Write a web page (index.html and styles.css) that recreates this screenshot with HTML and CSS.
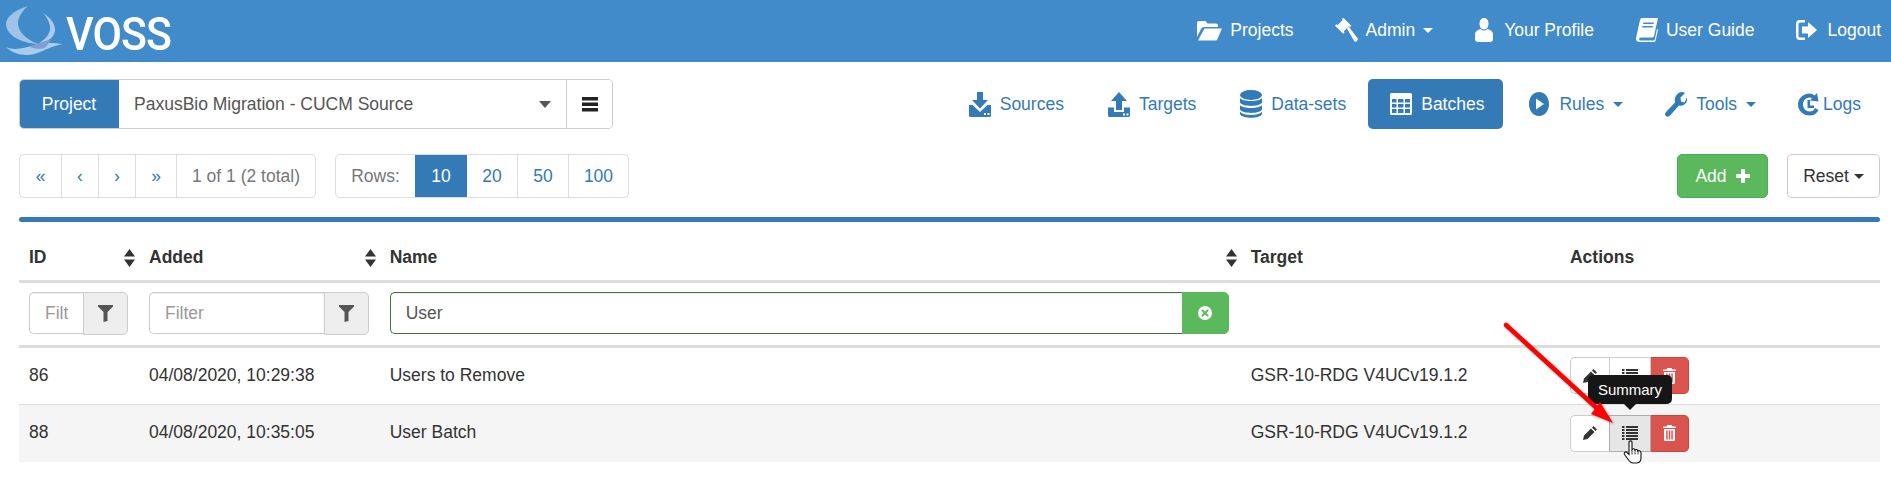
FILE: index.html
```html
<!DOCTYPE html>
<html lang="en">
<head>
<meta charset="utf-8">
<title>VOSS Batches</title>
<link rel="stylesheet" href="styles.css">
</head>
<body>
<svg class="defs" aria-hidden="true">
  <symbol id="i-folder" viewBox="0 0 25 21"><path d="M0 3Q0 1 2 1H8.5L10.5 3.5H19Q21 3.5 21 5.5V7H7Q5 7 4 9L0 17Z M7.5 8.5H25L20.5 19Q20 20.5 18.5 20.5H1Z"/></symbol>
  <symbol id="i-gavel" viewBox="0 0 24 26"><path d="M9 0L17 8 15.500 9.500 14.500 8.500 9 14 10 15 8.500 16.500 0 8 1.500 6.500 2.500 7.500 8 2 7 1Z"/><path d="M12.500 11L14.500 9 23.500 21Q24.500 22.500 23 24T20 24Z"/></symbol>
  <symbol id="i-user" viewBox="0 0 18 24"><path d="M9 0C12 0 13.500 2.500 13.500 5.500S12 11.500 9 11.500 4.500 8.500 4.500 5.500 6 0 9 0Z"/><path d="M5.500 11Q9 14 12.500 11C15.500 12 18 13.500 18 16V21Q18 24 15 24H3Q0 24 0 21V16C0 13.500 2.500 12 5.500 11Z"/></symbol>
  <symbol id="i-book" viewBox="0 0 22 24"><path fill-rule="evenodd" d="M6 0H22L18 18Q17.500 19.500 16 19.500H5Q3 19.500 3 21T5 22.500H18.500L21 11 22 12 19.500 23Q19 24 18 24H4Q0 24 0 20.500Q0 19.500 .5 18L4 2Q4.500 0 6 0ZM7.500 4.500L7 6H17.500L18 4.500ZM6.500 8L6 9.500H16.500L17 8Z"/></symbol>
  <symbol id="i-logout" viewBox="0 0 21 20"><path d="M4 0H9V2.500H4Q2.500 2.500 2.500 4V16Q2.500 17.500 4 17.500H9V20H4Q0 20 0 16V4Q0 0 4 0Z"/><path d="M12 2L21 10 12 18V13.500H6V6.500H12Z"/></symbol>
  <symbol id="i-import" viewBox="0 0 22 25"><path d="M8 0H14V8H19L11 16.500 3 8H8Z"/><path d="M0 13H3.500L11 20 18.500 13H22V23.500Q22 25 20.500 25H1.500Q0 25 0 23.500Z"/><rect x="15" y="21" width="2" height="2" fill="#fff"/><rect x="18.500" y="21" width="2" height="2" fill="#fff"/></symbol>
  <symbol id="i-export" viewBox="0 0 22 25"><path d="M11 0L19 9H14V18H8V9H3Z"/><path d="M0 15.500H6V20H16V15.500H22V23.500Q22 25 20.500 25H1.500Q0 25 0 23.500Z"/><rect x="15" y="21.500" width="2" height="2" fill="#fff"/><rect x="18.500" y="21.500" width="2" height="2" fill="#fff"/></symbol>
  <symbol id="i-db" viewBox="0 0 22 28"><ellipse cx="11" cy="5" rx="11" ry="5"/><path d="M0 8C2 12 20 12 22 8V12.500C20 17 2 17 0 12.500Z"/><path d="M0 15C2 19 20 19 22 15V19.500C20 24 2 24 0 19.500Z"/><path d="M0 21.500C2 26 20 26 22 21.500V24C20 29 2 29 0 24Z"/></symbol>
  <symbol id="i-th" viewBox="0 0 22 22"><path fill-rule="evenodd" d="M1.500 0H20.500Q22 0 22 1.500V20.500Q22 22 20.500 22H1.500Q0 22 0 20.500V1.500Q0 0 1.500 0ZM2 6V9.500H6.500V6ZM8 6V9.500H13.500V6ZM15 6V9.500H20V6ZM2 11V14.500H6.500V11ZM8 11V14.500H13.500V11ZM15 11V14.500H20V11ZM2 16V20H6.500V16ZM8 16V20H13.500V16ZM15 16V20H20V16Z"/></symbol>
  <symbol id="i-play" viewBox="0 0 20 24"><path fill-rule="evenodd" d="M10 0C16 0 20 5.500 20 12S16 24 10 24 0 18.500 0 12 4 0 10 0ZM7 6.500V17.500L15 12Z"/></symbol>
  <symbol id="i-wrench" viewBox="0 0 22 25"><path d="M16.500 0Q18.500 0 20 1L15.500 5.500 16 9.500 19.500 10.500 22 5Q22.500 9 20.500 11.500 18 14.500 14 13.500L5 23.500Q3 25.500 1 24T1 20L10 10.500Q9 6 11.500 3 13.500 0 16.500 0Z"/></symbol>
  <symbol id="i-logs" viewBox="0 0 21 25"><path fill-rule="evenodd" d="M11.500 1.500Q14.500 1.500 16.500 3.500L19 1 20.500 9.500 12 8.500 14 6Q13 5.500 11.500 5.500C8 5.500 5 8.500 5 12.500S8 19.500 11.500 19.500Q15.500 19.500 17 16L20.500 18Q18 23.500 11.500 23.500C5 23.500 0 18.500 0 12.500S5 1.500 11.500 1.500Z"/><path d="M9.500 8H12V13.500H16V16H9.500Z"/></symbol>
  <symbol id="i-menu" viewBox="0 0 16 15"><rect width="16" height="3.500"/><rect y="5.500" width="16" height="3.500"/><rect y="11" width="16" height="3.500"/></symbol>
  <symbol id="i-filter" viewBox="0 0 15 17"><path d="M0 0H15V1.500L9.500 7V16L5.500 17V7L0 1.500Z"/></symbol>
  <symbol id="i-x" viewBox="0 0 14 14"><path fill-rule="evenodd" d="M7 0A7 7 0 1 1 7 14 7 7 0 1 1 7 0ZM4.600 3.200L3.200 4.600 5.600 7 3.200 9.400 4.600 10.800 7 8.400 9.400 10.800 10.800 9.400 8.400 7 10.800 4.600 9.400 3.200 7 5.600Z"/></symbol>
  <symbol id="i-plus" viewBox="0 0 14 14"><path d="M5 0H9V5H14V9H9V14H5V9H0V5H5Z"/></symbol>
  <symbol id="i-pencil" viewBox="0 0 14 14"><path d="M10.500 0L14 3.500 12.500 5 9 1.500Z"/><path d="M8 2.500L11.500 6 4.500 13 0 14 1 9.500Z"/></symbol>
  <symbol id="i-list" viewBox="0 0 16 14"><path d="M0 0H2.500V2H0ZM4 0H16V2H4ZM0 3H2.500V5H0ZM4 3H16V5H4ZM0 6H2.500V8H0ZM4 6H16V8H4ZM0 9H2.500V11H0ZM4 9H16V11H4ZM0 12H2.500V14H0ZM4 12H16V14H4Z"/></symbol>
  <symbol id="i-trash" viewBox="0 0 13 16"><path d="M4.500 0H8.500L9.500 1.500H13V3H0V1.500H3.500Z"/><path fill-rule="evenodd" d="M1 4H12V14.500Q12 16 10.500 16H2.500Q1 16 1 14.500ZM3.200 5.500V14.500H4.700V5.500ZM5.750 5.500V14.500H7.250V5.500ZM8.300 5.500V14.500H9.800V5.500Z"/></symbol>
  <symbol id="i-sort" viewBox="0 0 11 18"><path d="M5.500 0L11 7.500H0ZM0 10.500H11L5.500 18Z"/></symbol>
</svg>

<header class="navbar">
  <a class="brand" href="#">
    <svg class="brand-mark" viewBox="0 0 60 50">
      <path class="arc-a" d="M23 0C10 4 1 11 1 18C1 28 14 37 33 38C20 33 12 24 13 16C14 10 18 4 23 0Z"/>
      <path class="arc-c" d="M38 7C46 12 50 18 50 24C50 31 43 36 33 38C41 33 46 27 45 20C44 15 41 10 38 7Z"/>
      <path class="arc-c" d="M1 41C10 45 18 42 30 39C40 36 50 37 58 38C48 40 42 43 35 46C25 51 10 50 1 41Z"/>
      <path class="arc-b" d="M24 40.500C32 38 38 35 46 34C44 37 42 39 41 41C36 44 30 43 24 40.500Z"/>
    </svg>
    <span class="brand-text">VOSS</span>
  </a>
  <nav class="nav-links">
    <a class="nav-link" href="#"><svg class="ic-folder"><use href="#i-folder"/></svg>Projects</a>
    <a class="nav-link" href="#"><svg class="ic-gavel"><use href="#i-gavel"/></svg>Admin<span class="caret"></span></a>
    <a class="nav-link gap-wide" href="#"><svg class="ic-user"><use href="#i-user"/></svg>Your Profile</a>
    <a class="nav-link gap-wide" href="#"><svg class="ic-book"><use href="#i-book"/></svg>User Guide</a>
    <a class="nav-link gap-wide" href="#"><svg class="ic-logout"><use href="#i-logout"/></svg>Logout</a>
  </nav>
</header>

<main class="page">
  <div class="top-row">
    <div class="project-group">
      <span class="project-label">Project</span>
      <span class="project-select">PaxusBio Migration - CUCM Source<span class="caret caret-select"></span></span>
      <button class="project-menu" type="button"><svg class="ic-menu"><use href="#i-menu"/></svg></button>
    </div>
    <nav class="pills">
      <a class="pill" href="#"><svg class="ic-import"><use href="#i-import"/></svg>Sources</a>
      <a class="pill" href="#"><svg class="ic-import"><use href="#i-export"/></svg>Targets</a>
      <a class="pill" href="#"><svg class="ic-db"><use href="#i-db"/></svg>Data-sets</a>
      <a class="pill active" href="#"><svg class="ic-th"><use href="#i-th"/></svg>Batches</a>
      <a class="pill pill-rules" href="#"><svg class="ic-play"><use href="#i-play"/></svg>Rules<span class="caret"></span></a>
      <a class="pill pill-tools" href="#"><svg class="ic-wrench"><use href="#i-wrench"/></svg>Tools<span class="caret"></span></a>
      <a class="pill pill-logs" href="#"><svg class="ic-logs"><use href="#i-logs"/></svg>Logs</a>
    </nav>
  </div>

  <div class="tool-row">
    <div class="pager-side">
      <div class="seg">
        <a class="seg-cell pg-first" href="#">«</a>
        <a class="seg-cell pg-prev" href="#">‹</a>
        <a class="seg-cell pg-next" href="#">›</a>
        <a class="seg-cell pg-last" href="#">»</a>
        <span class="seg-cell seg-text pg-info">1 of 1 (2 total)</span>
      </div>
      <div class="seg">
        <span class="seg-cell seg-text rows-label">Rows:</span>
        <a class="seg-cell rows-10 on" href="#">10</a>
        <a class="seg-cell rows-20" href="#">20</a>
        <a class="seg-cell rows-50" href="#">50</a>
        <a class="seg-cell rows-100" href="#">100</a>
      </div>
    </div>
    <div class="tool-actions">
      <button class="btn btn-add" type="button">Add<svg class="ic-plus"><use href="#i-plus"/></svg></button>
      <button class="btn btn-reset" type="button">Reset<span class="caret caret-reset"></span></button>
    </div>
  </div>

  <div class="rule"></div>

  <table class="grid">
    <colgroup>
      <col class="col-id"><col class="col-added"><col class="col-name"><col class="col-target"><col class="col-actions">
    </colgroup>
    <thead>
      <tr class="head-row">
        <th><div class="th-in">ID<svg class="ic-sort"><use href="#i-sort"/></svg></div></th>
        <th><div class="th-in">Added<svg class="ic-sort"><use href="#i-sort"/></svg></div></th>
        <th><div class="th-in">Name<svg class="ic-sort"><use href="#i-sort"/></svg></div></th>
        <th>Target</th>
        <th>Actions</th>
      </tr>
      <tr class="filter-row">
        <td><div class="fgroup"><input class="finput" type="text" placeholder="Filter"><span class="faddon faddon-id"><svg class="ic-filter"><use href="#i-filter"/></svg></span></div></td>
        <td><div class="fgroup"><input class="finput" type="text" placeholder="Filter"><span class="faddon"><svg class="ic-filter"><use href="#i-filter"/></svg></span></div></td>
        <td class="f-name"><div class="fgroup"><input class="finput finput-ok" type="text" value="User"><span class="faddon faddon-ok"><svg class="ic-x"><use href="#i-x"/></svg></span></div></td>
        <td></td>
        <td></td>
      </tr>
    </thead>
    <tbody>
      <tr class="data-row">
        <td>86</td><td>04/08/2020, 10:29:38</td><td>Users to Remove</td><td>GSR-10-RDG V4UCv19.1.2</td>
        <td><div class="acts">
          <button class="act act-edit" type="button"><svg class="ic-pencil"><use href="#i-pencil"/></svg></button>
          <button class="act act-list" type="button"><svg class="ic-list"><use href="#i-list"/></svg></button>
          <button class="act act-del" type="button"><svg class="ic-trash"><use href="#i-trash"/></svg></button>
        </div></td>
      </tr>
      <tr class="data-row alt">
        <td>88</td><td>04/08/2020, 10:35:05</td><td>User Batch</td><td>GSR-10-RDG V4UCv19.1.2</td>
        <td><div class="acts">
          <button class="act act-edit" type="button"><svg class="ic-pencil"><use href="#i-pencil"/></svg></button>
          <button class="act act-list hover" type="button"><svg class="ic-list"><use href="#i-list"/></svg><span class="tooltip">Summary</span></button>
          <button class="act act-del" type="button"><svg class="ic-trash"><use href="#i-trash"/></svg></button>
        </div></td>
      </tr>
    </tbody>
  </table>
</main>

<svg class="red-arrow" viewBox="0 0 120 110">
  <path d="M6 5L100 91" class="arrow-shaft"/>
  <path d="M113 103L91 94 100 82Z" class="arrow-head"/>
</svg>
<svg class="hand" viewBox="0 0 20 24">
  <path d="M6 2C6 .5 9 .5 9 2V9.500C10 8.500 11.500 8.500 12 10 13 9 14.500 9.500 15 11 16 10 18 11 18 13V18C18 21 16 23 13 23H10C8 23 7 22 6 20.500L1.500 14.500C.5 13 2.500 11 4 12.500L6 14.500Z"/>
  <path d="M9 10V14.500M12 10V14.500M15 11V14.500" class="hand-line"/>
</svg>
</body>
</html>
```

FILE: styles.css
```css
* { box-sizing: border-box; }
html, body { margin: 0; padding: 0; }
body {
  position: relative;
  width: 1891px;
  height: 487px;
  overflow: hidden;
  background: #fff;
  color: #333;
  font-family: "Liberation Sans", Arial, sans-serif;
  font-size: 17.5px;
  line-height: 25px;
}
a { text-decoration: none; color: inherit; }
svg { fill: currentColor; display: block; flex: none; }
.defs { position: absolute; width: 0; height: 0; overflow: hidden; }

/* top bar */
.navbar {
  height: 62px;
  background: #428bca;
  display: flex;
  justify-content: space-between;
  align-items: center;
  padding: 0 10px 0 5px;
  color: #fff;
}
.brand { display: flex; align-items: center; height: 62px; }
.brand-mark { width: 60px; height: 50px; margin-top: 0; }
.arc-a { fill: #9dc3e8; }
.arc-c { fill: #a9cbec; }
.arc-b { fill: #7f9ed4; }
.brand-text {
  margin-left: 1px;
  font-family: Roboto, sans-serif;
  font-weight: 500;
  font-size: 46px;
  line-height: 62px;
  letter-spacing: -1px;
  margin-top: 5px;
  transform: scaleX(.93);
  transform-origin: left center;
}
.nav-links { display: flex; gap: 41px; padding-bottom: 2px; }
.nav-link { display: flex; align-items: center; gap: 8px; }
.gap-wide { margin-left: 1px; }
.ic-folder { width: 25px; height: 21px; }
.ic-gavel { width: 23px; height: 25px; }
.ic-user { width: 18px; height: 24px; margin-right: 3px; }
.ic-book { width: 22px; height: 24px; }
.ic-logout { width: 21px; height: 20px; margin-right: 2px; }
.caret {
  display: inline-block;
  width: 0;
  height: 0;
  border-top: 5px solid currentColor;
  border-left: 5px solid transparent;
  border-right: 5px solid transparent;
}

/* page */
.page { padding: 0 11px 0 19px; }
.top-row {
  margin-top: 17px;
  display: flex;
  justify-content: space-between;
  height: 50px;
}
.project-group {
  width: 594px;
  display: flex;
  border: 1px solid #ccc;
  border-radius: 5px;
  overflow: hidden;
}
.project-label {
  width: 100px;
  margin: -1px 0 -1px -1px;
  background: #337ab7;
  color: #fff;
  display: flex;
  align-items: center;
  justify-content: center;
}
.project-select {
  flex: 1;
  display: flex;
  align-items: center;
  justify-content: space-between;
  padding: 0 15px;
  color: #555;
}
.caret-select {
  border-top-width: 7px;
  border-left-width: 6.500px;
  border-right-width: 6.500px;
}
.project-menu {
  width: 46px;
  border: 0;
  border-left: 1px solid #ccc;
  background: #fff;
  color: #222;
  padding: 0;
  display: flex;
  align-items: center;
  justify-content: center;
}
.ic-menu { width: 16px; height: 15px; }

.pills { display: flex; align-items: stretch; color: #337ab7; }
.pill {
  display: flex;
  align-items: center;
  gap: 9px;
  padding: 0 19px 0 22px;
  border-radius: 5px;
  margin-left: 3px;
}
.pill.active { background: #337ab7; color: #fff; }
.pill-rules { padding-left: 23px; }
.pill-tools { padding-left: 20px; }
.pill-logs { gap: 4px; padding-left: 20px; }
.ic-import { width: 22px; height: 25px; }
.ic-db { width: 22px; height: 28px; }
.ic-th { width: 22px; height: 22px; }
.ic-play { width: 20px; height: 24px; margin-right: 1px; }
.ic-wrench { width: 22px; height: 25px; }
.ic-logs { width: 21px; height: 25px; }

.tool-row {
  margin-top: 25px;
  height: 44px;
  display: flex;
  justify-content: space-between;
}
.pager-side { display: flex; gap: 19px; }
.seg {
  display: flex;
  border: 1px solid #ddd;
  border-radius: 5px;
  overflow: hidden;
  color: #337ab7;
}
.seg-cell {
  display: flex;
  align-items: center;
  justify-content: center;
  border-left: 1px solid #ddd;
}
.seg-cell:first-child { border-left: 0; }
.seg-text { color: #777; }
.pg-first { width: 41px; }
.pg-prev { width: 37px; }
.pg-next { width: 37px; }
.pg-last { width: 41px; }
.pg-info { width: 139px; }
.rows-label { width: 79px; }
.rows-10 { width: 52px; margin: -1px 0; }
.rows-10.on { background: #337ab7; color: #fff; border-left: 0; }
.rows-20 { width: 50px; border-left: 0; }
.rows-50 { width: 51px; }
.rows-100 { width: 60px; }

.tool-actions { display: flex; gap: 19px; }
.btn {
  height: 44px;
  border-radius: 5px;
  font: inherit;
  padding: 0;
  display: flex;
  align-items: center;
  justify-content: center;
}
.btn-add {
  width: 91px;
  background: #5cb85c;
  border: 1px solid #4cae4c;
  color: #fff;
  gap: 9px;
}
.ic-plus { width: 14px; height: 14px; }
.btn-reset {
  width: 93px;
  background: #fff;
  border: 1px solid #ccc;
  color: #333;
}
.caret-reset { margin-left: 5px; }

.rule {
  margin-top: 19px;
  height: 5px;
  background: #337ab7;
  border-radius: 3px;
}

/* table */
.grid {
  margin-top: 8px;
  width: 1861px;
  table-layout: fixed;
  border-collapse: separate;
  border-spacing: 0;
}
.col-id { width: 120px; }
.col-added { width: 240.700px; }
.col-name { width: 861px; }
.col-target { width: 319.300px; }
.col-actions { width: 320px; }
.head-row th {
  height: 53px;
  padding: 5px 4px 0 10px;
  text-align: left;
  font-weight: 700;
  border-bottom: 3px solid #ddd;
}
.th-in { display: flex; justify-content: space-between; align-items: center; }
.ic-sort { width: 11px; height: 18px; }
.filter-row td {
  height: 65px;
  padding: 9px 11px 11px 10px;
  border-bottom: 3px solid #ddd;
}
.filter-row .f-name { padding-right: 12px; }
.fgroup { display: flex; height: 42px; }
.finput {
  flex: 1;
  min-width: 0;
  height: 42px;
  font: inherit;
  color: #555;
  background: #fff;
  border: 1px solid #ccc;
  border-right: 0;
  border-radius: 5px 0 0 5px;
  padding: 0 15px;
  box-shadow: inset 0 1px 1px rgba(0, 0, 0, .075);
  outline: none;
}
.finput::placeholder { color: #999; opacity: 1; }
.finput-ok { border-color: #3c763d; }
.faddon {
  width: 45px;
  height: 43px;
  background: #eee;
  border: 1px solid #ccc;
  border-radius: 0 5px 5px 0;
  display: flex;
  align-items: center;
  justify-content: center;
  color: #555;
}
.faddon-ok {
  width: 47px;
  height: 42px;
  background: #5cb85c;
  border-color: #5cb85c;
  color: #fff;
}
.ic-filter { width: 15px; height: 17px; }
.ic-x { width: 14px; height: 14px; color: #fff; }
.data-row td {
  height: 57px;
  padding: 0 10px 2px;
  border-bottom: 1px solid #ddd;
}
.data-row.alt td { background: #f5f5f5; border-bottom: 0; }

.acts { display: flex; height: 37px; margin-top: 1px; }
.act {
  position: relative;
  height: 37px;
  padding: 0;
  display: flex;
  align-items: center;
  justify-content: center;
  border: 1px solid #ccc;
  background: #fff;
  color: #333;
}
.act-edit { width: 39px; border-radius: 5px 0 0 5px; border-right: 0; }
.act-list { width: 42px; }
.act-list.hover { background: #e6e6e6; border-color: #adadad; }
.act-del {
  width: 38px;
  background: #d9534f;
  border-color: #d43f3a;
  border-left: 0;
  color: #fff;
  border-radius: 0 5px 5px 0;
}
.ic-pencil { width: 14px; height: 14px; }
.ic-list { width: 16px; height: 14px; }
.ic-trash { width: 13px; height: 16px; }

/* overlays */
.tooltip {
  position: absolute;
  left: 50%;
  bottom: 47px;
  transform: translateX(-50%);
  width: 84px;
  height: 29px;
  background: #161616;
  color: #fff;
  font-size: 15px;
  line-height: 29px;
  text-align: center;
  border-radius: 5px;
}
.tooltip::after {
  content: "";
  position: absolute;
  left: 50%;
  top: 100%;
  margin-left: -6px;
  border-top: 6px solid #161616;
  border-left: 6px solid transparent;
  border-right: 6px solid transparent;
}
.red-arrow {
  position: absolute;
  left: 1500px;
  top: 320px;
  width: 120px;
  height: 110px;
  filter: drop-shadow(1px 1px 1px rgba(0, 0, 0, .35));
}
.arrow-shaft { stroke: #f00; stroke-width: 4.500px; stroke-linecap: round; fill: none; }
.arrow-head { fill: #f00; }
.hand {
  position: absolute;
  left: 1623px;
  top: 440px;
  width: 20px;
  height: 24px;
}
.hand path { fill: #fff; stroke: #111; stroke-width: 1.100px; }
.hand .hand-line { fill: none; stroke-width: .8px; }
```
